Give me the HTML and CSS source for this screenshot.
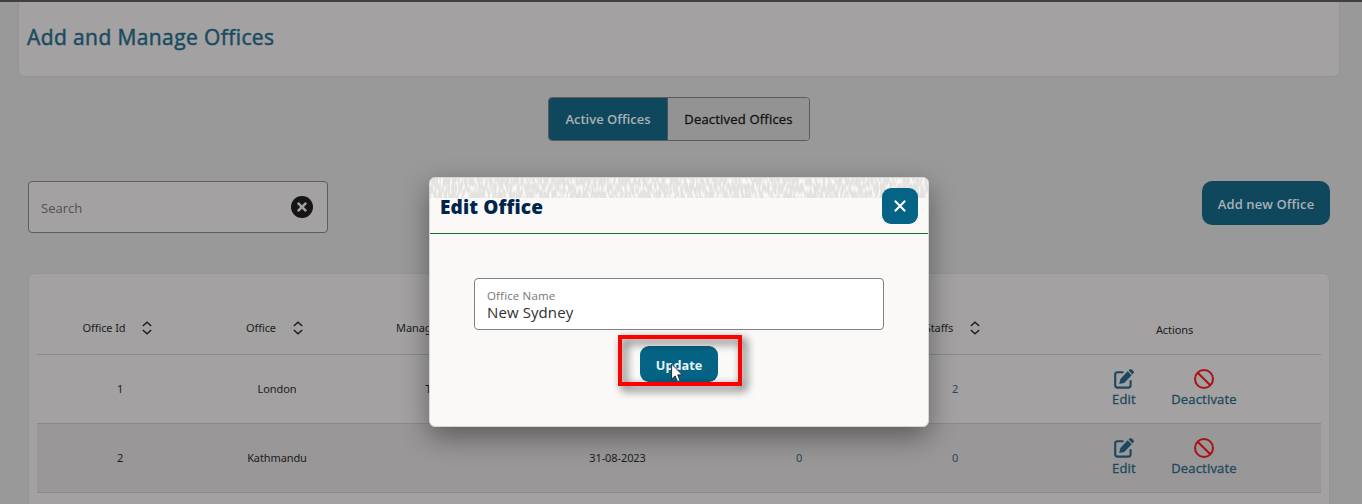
FILE: index.html
```html
<!DOCTYPE html>
<html lang="en">
<head>
<meta charset="utf-8">
<title>Add and Manage Offices</title>
<link rel="stylesheet" href="styles.css">
</head>
<body>
<svg class="defs" aria-hidden="true">
  <symbol id="sort" viewBox="0 0 10 14"><path d="M.8 5 5 1.2 9.2 5M.8 9 5 12.8 9.2 9" fill="none" stroke="currentColor" stroke-width="1.4"/></symbol>
  <symbol id="edit" viewBox="0 0 20 20"><path d="M9.5 3.2H3.6Q1.2 3.2 1.2 5.6v10.6q0 2.4 2.4 2.4h10.6q2.4 0 2.4-2.4v-5" fill="none" stroke="currentColor" stroke-width="2.1"/><path d="M13.7 2.3l4 4-7.5 7.6-5 1.2 1.2-5.1zM14.6 1.5l.8-.8q1.2-1.2 2.6 0l1.3 1.3q1.2 1.2 0 2.6l-.8.8z" fill="currentColor"/></symbol>
  <symbol id="ban" viewBox="0 0 20 20"><circle cx="10" cy="10" r="9" fill="none" stroke="currentColor" stroke-width="2"/><path d="M3.7 3.7 16.3 16.3" stroke="currentColor" stroke-width="2"/></symbol>
</svg>
<main class="page">
  <header class="page-header"><h1 class="page-title">Add and Manage Offices</h1></header>
  <div class="tabs">
    <button class="tab tab-active"><span>Active Offices</span></button>
    <button class="tab"><span>Deactived Offices</span></button>
  </div>
  <div class="toolbar">
    <div class="search"><span class="search-label">Search</span>
      <svg class="clear" viewBox="0 0 22 22"><circle cx="11" cy="11" r="11" fill="#151515"/><path d="M6.8 6.8l8.4 8.4M15.2 6.8l-8.4 8.4" stroke="#a3a1a1" stroke-width="2.6"/></svg>
    </div>
    <button class="add"><span>Add new Office</span></button>
  </div>
  <section class="table-card">
    <div class="row head">
      <div class="cell"><span>Office Id</span><svg class="sort"><use href="#sort"/></svg></div>
      <div class="cell"><span>Office</span><svg class="sort"><use href="#sort"/></svg></div>
      <div class="cell"><span>Manager</span><svg class="sort"><use href="#sort"/></svg></div>
      <div class="cell"></div>
      <div class="cell"></div>
      <div class="cell"><span>Staffs</span><svg class="sort"><use href="#sort"/></svg></div>
      <div class="cell head-actions"><span>Actions</span></div>
    </div>
    <div class="row">
      <div class="cell">1</div><div class="cell">London</div><div class="cell">Tim</div><div class="cell"></div><div class="cell"></div><div class="cell count">2</div>
      <div class="cell actions"><a class="action edit"><svg><use href="#edit"/></svg><span>Edit</span></a><a class="action deactivate"><svg><use href="#ban"/></svg><span>Deactivate</span></a></div>
    </div>
    <div class="row striped">
      <div class="cell">2</div><div class="cell">Kathmandu</div><div class="cell"></div><div class="cell date">31-08-2023</div><div class="cell count">0</div><div class="cell count">0</div>
      <div class="cell actions"><a class="action edit"><svg><use href="#edit"/></svg><span>Edit</span></a><a class="action deactivate"><svg><use href="#ban"/></svg><span>Deactivate</span></a></div>
    </div>
  </section>
</main>
<div class="modal" role="dialog">
  <svg class="texture" aria-hidden="true"><filter id="grain" x="0" y="0" width="100%" height="100%" color-interpolation-filters="sRGB"><feTurbulence type="fractalNoise" baseFrequency=".45 .14" numOctaves="1" seed="7"/><feColorMatrix values="0 0 0 0 .89  0 0 0 0 .885  0 0 0 0 .88  4 0 0 0 -1.2"/></filter><rect width="100%" height="100%" filter="url(#grain)"/></svg>
  <div class="modal-head"><h2 class="modal-title">Edit Office</h2>
    <button class="close"><svg viewBox="0 0 12 12"><path d="M.8.8l10.4 10.4M11.2.8.8 11.2" stroke="#fff" stroke-width="2"/></svg></button>
  </div>
  <div class="modal-body">
    <label class="field"><span class="field-label">Office Name</span><span class="field-value">New Sydney</span></label>
    <div class="update-wrap"><button class="update"><span>Update</span></button>
      <div class="highlight"></div>
      <svg class="cursor" viewBox="0 0 12 20"><path d="M.6 1v15.2l3.5-3.3 2.5 5.8 2.6-1.1-2.5-5.7h4.7z" fill="#fff" stroke="#222b3c" stroke-width="1"/></svg>
    </div>
  </div>
</div>
</body>
</html>
```
FILE: styles.css
```css
* { box-sizing: border-box; }
body { margin: 0; height: 504px; overflow: hidden; position: relative; background: #999; color: #1c1c1e; font-family: "Noto Sans", "Open Sans", sans-serif; font-size: 11px; letter-spacing: -.1px; }
button { font: inherit; margin: 0; padding: 0; border: 0; display: flex; align-items: center; justify-content: center; }
h1, h2 { margin: 0; }
span { white-space: nowrap; }
.defs { display: none; }
.page { height: 504px; overflow: hidden; border-top: 2px solid #403f43; display: flex; flex-direction: column; }
.page-header { height: 75px; flex: none; margin: 0 22px 0 18px; padding: 20px 8px 0; background: #a3a1a1; border: 1px solid #959494; border-top: 0; border-radius: 0 0 6px 6px; }
.page-title { font-family: "Open Sans", sans-serif; font-size: 21px; line-height: 30px; font-weight: 400; letter-spacing: .4px; color: #1a4b60; -webkit-text-stroke: .5px #1a4b60; }
.tabs { display: flex; width: 262px; height: 44px; flex: none; margin: 20px 0 0 548px; border: 1px solid #5b5b5b; border-radius: 4px; overflow: hidden; }
.tab { flex: 1; background: #939393; color: #111; font-family: "Open Sans", sans-serif; font-size: 13px; letter-spacing: .2px; -webkit-text-stroke: .3px #111; }
.tab-active { flex: 0 0 119px; background: #0f485d; color: #a9b1b5; font-weight: 600; letter-spacing: 0; -webkit-text-stroke: 0; border-right: 1px solid #3f5660; }
.toolbar { display: flex; justify-content: space-between; height: 52px; flex: none; margin: 40px 32px 0 28px; }
.search { width: 300px; display: flex; align-items: center; justify-content: space-between; padding: 0 14px 0 12px; border: 1px solid #5e5d5d; border-radius: 4px; background: #a3a1a1; color: #515151; font-family: "Open Sans", sans-serif; font-size: 13px; letter-spacing: 0; }
.search-label { padding-top: 2px; }
.clear { width: 22px; height: 22px; }
.add { width: 128px; height: 44px; padding-top: 2px; border-radius: 10px; background: #0f485d; color: #a9b1b5; font-family: "Open Sans", sans-serif; font-size: 13px; font-weight: 600; letter-spacing: .1px; }
.table-card { flex: 1 0 240px; margin: 40px 32px 0 28px; padding: 28px 8px 0; border: 1px solid #959494; border-bottom: 0; border-radius: 6px 6px 0 0; background: #a3a1a1; }
.row { display: grid; grid-template-columns: 166px 148px 168px 197px 166px 146px 1fr; height: 69px; border-bottom: 1px solid #8b8a8a; }
.head { height: 53px; }
.striped { background: #999797; }
.cell { display: flex; align-items: center; justify-content: center; padding-bottom: 1px; }
.head .cell { gap: 17px; padding-right: 5px; padding-bottom: 0; }
.head .cell span { position: relative; top: -1px; }
.head .head-actions { padding: 4px 0 0; }
.sort { width: 10px; height: 14px; }
.count { color: #28485a; }
.actions { justify-content: flex-start; padding-left: 84px; gap: 35px; color: #1b485c; font-family: "Open Sans", sans-serif; font-size: 13px; letter-spacing: .2px; -webkit-text-stroke: .3px #1b485c; }
.action { display: flex; flex-direction: column; align-items: center; gap: 1px; }
.edit { width: 24px; }
.deactivate { width: 66px; }
.action svg { width: 20px; height: 20px; }
.action span { line-height: 18px; }
.deactivate svg { color: #a81214; }
.modal { position: absolute; left: 429px; top: 177px; width: 500px; height: 250px; border: 1px solid #d6d5d4; border-radius: 6px; background: #faf9f8; box-shadow: 0 10px 28px rgba(0,0,0,.4); }
.texture { position: absolute; left: 0; top: 0; width: 498px; height: 20px; border-radius: 5px 5px 0 0; }
.modal-head { position: relative; display: flex; align-items: center; justify-content: space-between; height: 56px; padding: 0 10px; border-bottom: 1px solid #16761c; }
.modal-title { font-family: "Open Sans", sans-serif; font-size: 19px; line-height: 28px; font-weight: 800; letter-spacing: .15px; color: #00254d; padding-top: 2px; }
.close { width: 36px; height: 36px; border-radius: 9px; background: #056485; }
.close svg { width: 12px; height: 12px; }
.modal-body { display: flex; flex-direction: column; align-items: center; padding-top: 44px; }
.field { display: flex; flex-direction: column; width: 410px; height: 52px; padding: 9px 12px; border: 1px solid #818181; border-radius: 4px; background: #fff; font-family: "Open Sans", sans-serif; }
.field-label { font-size: 11.5px; line-height: 16px; letter-spacing: .15px; color: #777; }
.field-value { font-size: 15px; line-height: 17px; letter-spacing: .1px; color: #303030; }
.update-wrap { position: relative; margin-top: 16px; }
.update { width: 78px; height: 36px; padding-top: 2px; border-radius: 9px; background: #056485; color: #e8f5fa; font-family: "Open Sans", sans-serif; font-size: 12.7px; font-weight: 700; letter-spacing: 0; }
.highlight { position: absolute; left: -22px; top: -11px; width: 124px; height: 51px; border: 4px solid #f00; filter: drop-shadow(4px 4px 5px rgba(0,0,0,.75)); }
.cursor { position: absolute; left: 31px; top: 17px; width: 12px; height: 20px; }
```
